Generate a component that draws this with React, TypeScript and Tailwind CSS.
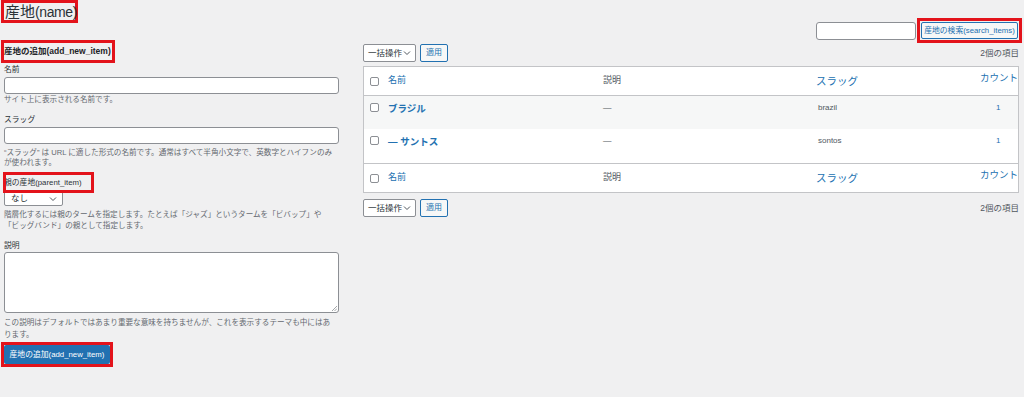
import React from "react";

const Check = () => (
  <span className="block w-[9px] h-[9px] border border-[#8c8f94] rounded-[2px] bg-white" />
);

const Chevron = () => (
  <svg width="8" height="6" viewBox="0 0 8 6" className="text-[#50575e]">
    <path d="M1 1.5 L4 4.5 L7 1.5" fill="none" stroke="currentColor" strokeWidth="1" />
  </svg>
);

const BulkBar = () => (
  <div className="flex items-center justify-between h-[18px]">
    <div className="flex items-center gap-[4px]">
      <div className="flex items-center justify-between w-[53px] h-[18px] bg-white border border-[#8c8f94] rounded-[2px] pl-[4px] pr-[4px] text-[8.5px] text-[#2c3338]">
        <span>一括操作</span>
        <Chevron />
      </div>
      <div className="flex items-center justify-center w-[28px] h-[18px] bg-[#f6f7f7] border border-[#2271b1] rounded-[2px] text-[8px] text-[#2271b1]">
        適用
      </div>
    </div>
    <span className="text-[8.5px] text-[#50575e]">2個の項目</span>
  </div>
);

const Row = ({ cls, children }: { cls: string; children: React.ReactNode }) => (
  <div className={"grid grid-cols-[24px_215px_213px_164px_1fr] " + cls}>{children}</div>
);

export default function App() {
  return (
    <div className="w-[1024px] h-[397px] bg-[#f0f0f1] font-['Liberation_Sans','Noto_Sans_CJK_JP',sans-serif] text-[#3c434a] overflow-hidden flex">
      {/* Left column */}
      <div className="w-[345px] shrink-0 pl-[1px] flex flex-col">
        <div className="w-[77px] h-[23px] border-[3px] border-[#e3131b] flex items-center pl-[1px]">
          <span className="text-[15px] leading-none text-[#2c3338] whitespace-nowrap">
            産地<span className="text-[14px] tracking-[-0.4px]">(name)</span>
          </span>
        </div>
        <div className="mt-[17px] w-[114px] h-[23px] border-[3px] border-[#e3131b] flex items-center">
          <span className="text-[8.5px] font-bold text-[#1d2327] whitespace-nowrap">産地の追加(add_new_item)</span>
        </div>
        <div className="ml-[3px] mr-[6px]">
          <div className="mt-[2px] text-[7.8px] leading-[10px] text-[#2c3338]">名前</div>
          <div className="mt-[2px] h-[17px] bg-white border border-[#8c8f94] rounded-[3px]" />
          <div className="mt-[1px] text-[7.6px] leading-[10px] text-[#646970]">サイト上に表示される名前です。</div>
          <div className="mt-[10px] text-[7.8px] leading-[10px] text-[#2c3338]">スラッグ</div>
          <div className="mt-[2px] h-[17px] bg-white border border-[#8c8f94] rounded-[3px]" />
          <div className="mt-[4px] text-[7.6px] leading-[10px] text-[#646970]">
            “スラッグ” は URL に適した形式の名前です。通常はすべて半角小文字で、英数字とハイフンのみ
            <br />
            が使われます。
          </div>
        </div>
        <div className="relative mt-[4px] h-[21px]">
          <div className="absolute left-[2px] top-[0px] w-[91px] h-[21px] border-[3px] border-[#e3131b] z-10" />
          <div className="absolute left-[3px] top-[6px] text-[7.8px] leading-[10px] text-[#2c3338] whitespace-nowrap">
            親の産地(parent_item)
          </div>
        </div>
        <div className="ml-[3px] mr-[6px]">
          <div className="-mt-[2px] w-[59px] h-[15px] bg-white border border-[#8c8f94] rounded-[2px] flex items-center justify-between pl-[6px] pr-[5px] text-[8.5px] text-[#2c3338]">
            <span>なし</span>
            <Chevron />
          </div>
          <div className="mt-[3px] text-[7.6px] leading-[11px] text-[#646970]">
            階層化するには親のタームを指定します。たとえば「ジャズ」というタームを「ビバップ」や
            <br />
            「ビッグバンド」の親として指定します。
          </div>
          <div className="mt-[10px] text-[7.8px] leading-[10px] text-[#2c3338]">説明</div>
          <div className="relative mt-[1px] h-[61px] bg-white border border-[#8c8f94] rounded-[3px]">
            <svg className="absolute right-[1px] bottom-[1px]" width="6" height="6" viewBox="0 0 6 6">
              <path d="M6 1 L1 6 M6 3.5 L3.5 6" stroke="#8c8f94" strokeWidth="0.8" />
            </svg>
          </div>
          <div className="mt-[4px] text-[7.6px] leading-[12px] text-[#646970]">
            この説明はデフォルトではあまり重要な意味を持ちませんが、これを表示するテーマも中にはあ
            <br />
            ります。
          </div>
        </div>
        <div className="mt-[1px] w-[112px] h-[25px] border-[3px] border-[#e3131b] flex items-center">
          <div className="w-[106px] h-[19px] bg-[#2271b1] rounded-[2px] flex items-center justify-center text-[7.8px] text-white whitespace-nowrap">
            産地の追加(add_new_item)
          </div>
        </div>
      </div>

      {/* Right column */}
      <div className="ml-[18px] w-[656px] shrink-0 flex flex-col pt-[18px]">
        <div className="flex justify-end items-center -mr-[3px]">
          <div className="w-[100px] h-[18px] bg-white border border-[#8c8f94] rounded-[3px] mr-[1px]" />
          <div className="w-[105px] h-[25px] border-[3px] border-[#e3131b] flex items-center justify-center">
            <div className="w-[97px] h-[17px] bg-[#f6f7f7] border border-[#2271b1] rounded-[2px] flex items-center justify-center text-[7.8px] text-[#2271b1] whitespace-nowrap">
              産地の検索(search_items)
            </div>
          </div>
        </div>
        <div className="mt-[1px]">
          <BulkBar />
        </div>
        <div className="mt-[4px] bg-white border border-[#c3c4c7] text-[8.5px]">
          <Row cls="h-[29px] border-b border-[#c3c4c7] items-center">
            <div className="pl-[6px]"><Check /></div>
            <div className="text-[9px] text-[#2271b1]">名前</div>
            <div className="text-[9px] text-[#50575e]">説明</div>
            <div className="text-[10.5px] text-[#2271b1] pt-[2px]">スラッグ</div>
            <div className="text-[9.5px] text-[#2271b1] -mt-[6px]">カウント</div>
          </Row>
          <Row cls="h-[33px] bg-[#f6f7f7] items-start pt-[6px]">
            <div className="pl-[6px] pt-[1px]"><Check /></div>
            <div className="text-[9.5px] font-bold text-[#2271b1]">ブラジル</div>
            <div className="text-[#50575e]">—</div>
            <div className="text-[8px] text-[#50575e] pl-[2px]">brazil</div>
            <div className="text-[8px] text-[#2271b1] pl-[16px]">1</div>
          </Row>
          <Row cls="h-[34px] bg-white items-start pt-[6px]">
            <div className="pl-[6px] pt-[1px]"><Check /></div>
            <div className="text-[9.5px] font-bold text-[#2271b1]">— サントス</div>
            <div className="text-[#50575e]">—</div>
            <div className="text-[8px] text-[#50575e] pl-[2px]">sontos</div>
            <div className="text-[8px] text-[#2271b1] pl-[16px]">1</div>
          </Row>
          <Row cls="h-[29px] border-t border-[#c3c4c7] items-center">
            <div className="pl-[6px]"><Check /></div>
            <div className="text-[9px] text-[#2271b1]">名前</div>
            <div className="text-[9px] text-[#50575e]">説明</div>
            <div className="text-[10.5px] text-[#2271b1] pt-[2px]">スラッグ</div>
            <div className="text-[9.5px] text-[#2271b1] -mt-[6px]">カウント</div>
          </Row>
        </div>
        <div className="mt-[6px]">
          <BulkBar />
        </div>
      </div>
    </div>
  );
}
